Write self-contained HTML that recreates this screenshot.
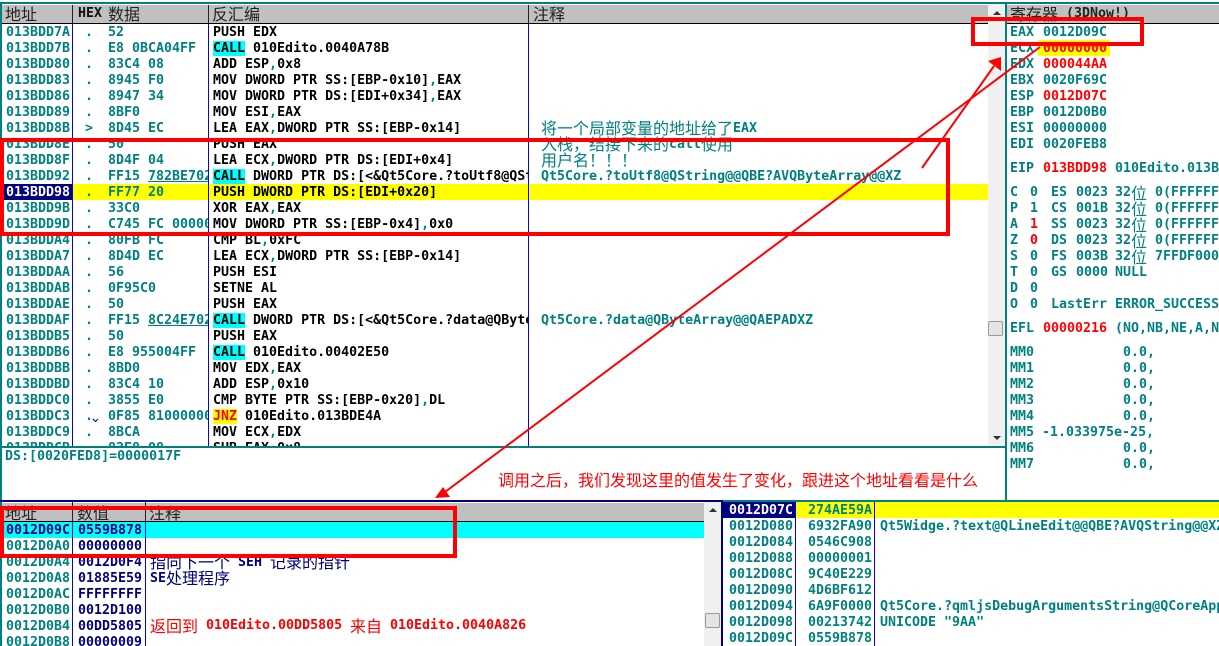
<!DOCTYPE html>
<html><head><meta charset="utf-8">
<style>
html,body{margin:0;padding:0;background:#fff}
#p{position:relative;width:1219px;height:646px;overflow:hidden;background:#fff;font:bold 13.3px/18px "DejaVu Sans Mono","Liberation Mono",monospace;color:#008080}
#p div,#p span{position:absolute;white-space:pre}
.c{font:16px/16px "Noto Sans CJK SC","WenQuanYi Zen Hei",sans-serif!important;font-weight:400}
#p span.n{position:static}
.hd{background:#c0c0c0;height:18px;top:5px}
.h{top:4px;color:#222;font:16px/18px "Noto Sans CJK SC","WenQuanYi Zen Hei",sans-serif}
.l{background:#00f;width:1px}
.r{left:0;width:988px;height:18px;overflow:hidden}
.a{left:6px}.d{left:85px}.x{left:108px;width:100px;height:18px;overflow:hidden}.s{left:213px;width:315px;height:18px;overflow:hidden;color:#000}.t{left:541px}
.s i{font-style:normal;color:#008080}
.s b{background:#0ff;font-weight:bold}
.k{left:1010px}.v{left:1043px}.red{color:#f00}
.f1{left:1030px}.f2{left:1051px}.f3{left:1076px}.f4{left:1115px}.f5{left:1155px}.w4{left:1131px}
.m{left:1123px}
.q{left:6px}.w{left:78px;color:#000080}.nv{color:#000080}
.z1{left:729px}.z2{left:808px}.z3{left:880px}
</style></head><body><div id="p">

<div style="left:0;top:2px;width:1219px;height:2px;background:#008080"></div>
<div class="hd" style="left:2px;width:986px"></div>
<div class="hd" style="left:1007px;width:212px"></div>
<div style="left:2px;top:23px;width:986px;height:1px;background:#000"></div>
<div style="left:1007px;top:23px;width:212px;height:1px;background:#000"></div>
<div style="left:72px;top:5px;width:1px;height:18px;background:#222"></div>
<div style="left:208px;top:5px;width:1px;height:18px;background:#222"></div>
<div style="left:528px;top:5px;width:1px;height:18px;background:#222"></div>
<div class="h" style="left:5px">地址</div>
<div style="left:78px;top:5px;color:#111">HEX</div>
<div class="h" style="left:108px">数据</div>
<div class="h" style="left:212px">反汇编</div>
<div class="h" style="left:533px">注释</div>
<div class="h" style="left:1010px">寄存器</div>
<div style="left:1066px;top:5px;color:#222">(3DNow!)</div>

<div style="left:0;top:2px;width:2px;height:644px;background:#008080"></div>

<div style="left:0;top:24px;width:988px;height:422px;overflow:hidden">
<div style="left:0;top:160px;width:988px;height:16px;background:#ff0"></div>
<div style="left:2px;top:160px;width:70px;height:16px;background:#000080"></div>
<div class="r" style="top:0"><span class="a">013BDD7A</span><span class="d">.</span><span class="x">52</span><span class="s">PUSH EDX</span></div>
<div class="r" style="top:16px"><span class="a">013BDD7B</span><span class="d">.</span><span class="x">E8 0BCA04FF</span><span class="s"><b>CALL</b> 010Edito.0040A78B</span></div>
<div class="r" style="top:32px"><span class="a">013BDD80</span><span class="d">.</span><span class="x">83C4 08</span><span class="s">ADD ESP<i>,</i>0x8</span></div>
<div class="r" style="top:48px"><span class="a">013BDD83</span><span class="d">.</span><span class="x">8945 F0</span><span class="s">MOV DWORD PTR SS:[EBP-0x10]<i>,</i>EAX</span></div>
<div class="r" style="top:64px"><span class="a">013BDD86</span><span class="d">.</span><span class="x">8947 34</span><span class="s">MOV DWORD PTR DS:[EDI+0x34]<i>,</i>EAX</span></div>
<div class="r" style="top:80px"><span class="a">013BDD89</span><span class="d">.</span><span class="x">8BF0</span><span class="s">MOV ESI<i>,</i>EAX</span></div>
<div class="r" style="top:96px"><span class="a">013BDD8B</span><span class="d">&gt;</span><span class="x">8D45 EC</span><span class="s">LEA EAX<i>,</i>DWORD PTR SS:[EBP-0x14]</span></div>
<div class="r" style="top:112px"><span class="a">013BDD8E</span><span class="d">.</span><span class="x">50</span><span class="s">PUSH EAX</span></div>
<div class="r" style="top:128px"><span class="a">013BDD8F</span><span class="d">.</span><span class="x">8D4F 04</span><span class="s">LEA ECX<i>,</i>DWORD PTR DS:[EDI+0x4]</span></div>
<div class="r" style="top:144px"><span class="a">013BDD92</span><span class="d">.</span><span class="x">FF15 <span class="n" style="text-decoration:underline">782BE702</span></span><span class="s"><b>CALL</b> DWORD PTR DS:[&lt;&amp;Qt5Core.?toUtf8@QString@@QBE?AVQByteArray@@XZ&gt;]</span><span class="t">Qt5Core.?toUtf8@QString@@QBE?AVQByteArray@@XZ</span></div>
<div class="r" style="top:160px"><span class="a" style="color:#fff">013BDD98</span><span class="d">.</span><span class="x">FF77 20</span><span class="s">PUSH DWORD PTR DS:[EDI+0x20]</span></div>
<div class="r" style="top:176px"><span class="a">013BDD9B</span><span class="d">.</span><span class="x">33C0</span><span class="s">XOR EAX<i>,</i>EAX</span></div>
<div class="r" style="top:192px"><span class="a">013BDD9D</span><span class="d">.</span><span class="x">C745 FC 00000000</span><span class="s">MOV DWORD PTR SS:[EBP-0x4]<i>,</i>0x0</span></div>
<div class="r" style="top:208px"><span class="a">013BDDA4</span><span class="d">.</span><span class="x">80FB FC</span><span class="s">CMP BL<i>,</i>0xFC</span></div>
<div class="r" style="top:224px"><span class="a">013BDDA7</span><span class="d">.</span><span class="x">8D4D EC</span><span class="s">LEA ECX<i>,</i>DWORD PTR SS:[EBP-0x14]</span></div>
<div class="r" style="top:240px"><span class="a">013BDDAA</span><span class="d">.</span><span class="x">56</span><span class="s">PUSH ESI</span></div>
<div class="r" style="top:256px"><span class="a">013BDDAB</span><span class="d">.</span><span class="x">0F95C0</span><span class="s">SETNE AL</span></div>
<div class="r" style="top:272px"><span class="a">013BDDAE</span><span class="d">.</span><span class="x">50</span><span class="s">PUSH EAX</span></div>
<div class="r" style="top:288px"><span class="a">013BDDAF</span><span class="d">.</span><span class="x">FF15 <span class="n" style="text-decoration:underline">8C24E702</span></span><span class="s"><b>CALL</b> DWORD PTR DS:[&lt;&amp;Qt5Core.?data@QByteArray@@QAEPADXZ&gt;]</span><span class="t">Qt5Core.?data@QByteArray@@QAEPADXZ</span></div>
<div class="r" style="top:304px"><span class="a">013BDDB5</span><span class="d">.</span><span class="x">50</span><span class="s">PUSH EAX</span></div>
<div class="r" style="top:320px"><span class="a">013BDDB6</span><span class="d">.</span><span class="x">E8 955004FF</span><span class="s"><b>CALL</b> 010Edito.00402E50</span></div>
<div class="r" style="top:336px"><span class="a">013BDDBB</span><span class="d">.</span><span class="x">8BD0</span><span class="s">MOV EDX<i>,</i>EAX</span></div>
<div class="r" style="top:352px"><span class="a">013BDDBD</span><span class="d">.</span><span class="x">83C4 10</span><span class="s">ADD ESP<i>,</i>0x10</span></div>
<div class="r" style="top:368px"><span class="a">013BDDC0</span><span class="d">.</span><span class="x">3855 E0</span><span class="s">CMP BYTE PTR SS:[EBP-0x20]<i>,</i>DL</span></div>
<div class="r" style="top:384px"><span class="a">013BDDC3</span><span class="d">.</span><span class="x">0F85 81000000</span><span class="s"><b style="background:#ff0;color:#f00">JNZ</b> 010Edito.013BDE4A</span></div>
<div class="r" style="top:400px"><span class="a">013BDDC9</span><span class="d">.</span><span class="x">8BCA</span><span class="s">MOV ECX<i>,</i>EDX</span></div>
<div class="r" style="top:416px"><span class="a">013BDDCB</span><span class="d">.</span><span class="x">83E8 08</span><span class="s">SUB EAX<i>,</i>0x8</span></div>
</div>
<div class="l" style="left:72px;top:24px;height:422px"></div>
<div class="l" style="left:208px;top:24px;height:422px"></div>
<div class="l" style="left:528px;top:24px;height:422px"></div>

<!-- annotation -->
<div class="c" style="left:541px;top:119px">将一个局部变量的地址给了</div><div style="left:733px;top:120px">EAX</div>
<div class="c" style="left:541px;top:135px">入栈，结接下来的</div><div style="left:669px;top:136px">call</div><div class="c" style="left:701px;top:135px">使用</div>
<div class="c" style="left:541px;top:151px">用户名！！！</div>

<!-- scrollbar top -->
<div style="left:988px;top:4px;width:17px;height:442px;background:#f0f0f0"></div>
<div style="left:993px;top:11px;width:0;height:0;border:4px solid transparent;border-top:0;border-bottom:4px solid #333"></div>
<div style="left:993px;top:436px;width:0;height:0;border:4px solid transparent;border-bottom:0;border-top:4px solid #333"></div>
<div style="left:988px;top:321px;width:13px;height:13px;background:#e4e4e4;border:1px solid #999;border-radius:2px"></div>

<!-- registers -->
<div style="left:1005px;top:2px;width:2px;height:499px;background:#008080"></div>
<div style="left:1038px;top:40px;width:72px;height:16px;background:#ff0"></div>
<div class="k" style="top:24px">EAX</div><div class="v" style="top:24px">0012D09C</div>
<div class="k" style="top:40px">ECX</div><div class="v red" style="top:40px">00000000</div>
<div class="k" style="top:56px">EDX</div><div class="v red" style="top:56px">000044AA</div>
<div class="k" style="top:72px">EBX</div><div class="v" style="top:72px">0020F69C</div>
<div class="k" style="top:88px">ESP</div><div class="v red" style="top:88px">0012D07C</div>
<div class="k" style="top:104px">EBP</div><div class="v" style="top:104px">0012D0B0</div>
<div class="k" style="top:120px">ESI</div><div class="v" style="top:120px">00000000</div>
<div class="k" style="top:136px">EDI</div><div class="v" style="top:136px">0020FEB8</div>
<div class="k" style="top:160px">EIP</div><div class="v red" style="top:160px">013BDD98</div><div class="f4" style="top:160px">010Edito.013B</div>

<div class="k" style="top:184px">C</div><div class="f1" style="top:184px">0</div><div class="f2" style="top:184px">ES</div><div class="f3" style="top:184px">0023</div><div class="f4" style="top:184px">32</div><div class="c w4" style="top:184px">位</div><div class="f5" style="top:184px">0(FFFFFF</div>
<div class="k" style="top:200px">P</div><div class="f1" style="top:200px">1</div><div class="f2" style="top:200px">CS</div><div class="f3" style="top:200px">001B</div><div class="f4" style="top:200px">32</div><div class="c w4" style="top:200px">位</div><div class="f5" style="top:200px">0(FFFFFF</div>
<div class="k" style="top:216px">A</div><div class="f1 red" style="top:216px">1</div><div class="f2" style="top:216px">SS</div><div class="f3" style="top:216px">0023</div><div class="f4" style="top:216px">32</div><div class="c w4" style="top:216px">位</div><div class="f5" style="top:216px">0(FFFFFF</div>
<div class="k" style="top:232px">Z</div><div class="f1 red" style="top:232px">0</div><div class="f2" style="top:232px">DS</div><div class="f3" style="top:232px">0023</div><div class="f4" style="top:232px">32</div><div class="c w4" style="top:232px">位</div><div class="f5" style="top:232px">0(FFFFFF</div>
<div class="k" style="top:248px">S</div><div class="f1" style="top:248px">0</div><div class="f2" style="top:248px">FS</div><div class="f3" style="top:248px">003B</div><div class="f4" style="top:248px">32</div><div class="c w4" style="top:248px">位</div><div class="f5" style="top:248px">7FFDF000</div>
<div class="k" style="top:264px">T</div><div class="f1" style="top:264px">0</div><div class="f2" style="top:264px">GS</div><div class="f3" style="top:264px">0000</div><div class="f4" style="top:264px">NULL</div>
<div class="k" style="top:280px">D</div><div class="f1" style="top:280px">0</div>
<div class="k" style="top:296px">O</div><div class="f1" style="top:296px">0</div><div class="f2" style="top:296px">LastErr</div><div class="f4" style="top:296px">ERROR_SUCCESS</div>
<div class="k" style="top:320px">EFL</div><div class="v red" style="top:320px">00000216</div><div class="f4" style="top:320px">(NO,NB,NE,A,N</div>
<div class="k" style="top:344px">MM0</div><div class="m" style="top:344px">0.0,</div>
<div class="k" style="top:360px">MM1</div><div class="m" style="top:360px">0.0,</div>
<div class="k" style="top:376px">MM2</div><div class="m" style="top:376px">0.0,</div>
<div class="k" style="top:392px">MM3</div><div class="m" style="top:392px">0.0,</div>
<div class="k" style="top:408px">MM4</div><div class="m" style="top:408px">0.0,</div>
<div class="k" style="top:424px">MM5</div><div style="left:1042px;top:424px">-1.033975e-25,</div>
<div class="k" style="top:440px">MM6</div><div class="m" style="top:440px">0.0,</div>
<div class="k" style="top:456px">MM7</div><div class="m" style="top:456px">0.0,</div>

<!-- info pane -->
<div style="left:0;top:446px;width:1005px;height:2px;background:#008080"></div>
<div style="left:5px;top:448px">DS:[0020FED8]=0000017F</div>
<div class="c" style="left:498px;top:471px;color:#f00">调用之后，我们发现这里的值发生了变化，跟进这个地址看看是什么</div>

<!-- dump pane -->
<div style="left:0;top:500px;width:722px;height:2px;background:#000080"></div>
<div style="left:722px;top:500px;width:497px;height:2px;background:#008080"></div>
<div style="left:2px;top:503px;width:702px;height:19px;background:#c0c0c0"></div>
<div style="left:2px;top:521px;width:702px;height:1px;background:#000"></div>
<div style="left:72px;top:502px;width:1px;height:20px;background:#222"></div>
<div style="left:145px;top:502px;width:1px;height:20px;background:#222"></div>
<div class="h" style="left:5px;top:503px">地址</div>
<div class="h" style="left:77px;top:503px">数值</div>
<div class="h" style="left:149px;top:503px">注释</div>
<div style="left:2px;top:522px;width:702px;height:16px;background:#0ff"></div>
<div class="l" style="left:72px;top:522px;height:124px"></div>
<div class="l" style="left:145px;top:522px;height:124px"></div>
<div class="q" style="top:522px;color:#000080">0012D09C</div><div class="w" style="top:522px">0559B878</div>
<div class="q" style="top:538px">0012D0A0</div><div class="w" style="top:538px">00000000</div>
<div class="q" style="top:554px">0012D0A4</div><div class="w" style="top:554px">0012D0F4</div>
<div class="c nv" style="left:150px;top:553px">指向下一个</div><div class="nv" style="left:238px;top:554px">SEH</div><div class="c nv" style="left:270px;top:553px">记录的指针</div>
<div class="q" style="top:570px">0012D0A8</div><div class="w" style="top:570px">01885E59</div>
<div class="nv" style="left:150px;top:570px">SE</div><div class="c nv" style="left:166px;top:569px">处理程序</div>
<div class="q" style="top:586px">0012D0AC</div><div class="w" style="top:586px">FFFFFFFF</div>
<div class="q" style="top:602px">0012D0B0</div><div class="w" style="top:602px">0012D100</div>
<div class="q" style="top:618px">0012D0B4</div><div class="w" style="top:618px">00DD5805</div>
<div class="c" style="left:150px;top:617px;color:#f00">返回到</div><div class="red" style="left:206px;top:617px">010Edito.00DD5805</div><div class="c" style="left:350px;top:617px;color:#f00">来自</div><div class="red" style="left:390px;top:617px">010Edito.0040A826</div>
<div class="q" style="top:634px">0012D0B8</div><div class="w" style="top:634px">00000009</div>

<!-- bottom scrollbar -->
<div style="left:704px;top:502px;width:17px;height:144px;background:#f0f0f0"></div>
<div style="left:709px;top:508px;width:0;height:0;border:4px solid transparent;border-top:0;border-bottom:4px solid #333"></div>
<div style="left:705px;top:613px;width:13px;height:13px;background:#e4e4e4;border:1px solid #999;border-radius:2px"></div>

<!-- stack -->
<div style="left:721px;top:500px;width:2px;height:146px;background:#000080"></div>
<div style="left:723px;top:502px;width:72px;height:16px;background:#000080"></div>
<div style="left:795px;top:502px;width:424px;height:16px;background:#ff0"></div>
<div class="l" style="left:795px;top:502px;height:144px"></div>
<div class="l" style="left:874px;top:502px;height:144px"></div>
<div class="z1" style="top:502px;color:#fff">0012D07C</div><div class="z2" style="top:502px">274AE59A</div>
<div class="z1" style="top:518px">0012D080</div><div class="z2" style="top:518px">6932FA90</div><div class="z3" style="top:518px">Qt5Widge.?text@QLineEdit@@QBE?AVQString@@XZ</div>
<div class="z1" style="top:534px">0012D084</div><div class="z2" style="top:534px">0546C908</div>
<div class="z1" style="top:550px">0012D088</div><div class="z2" style="top:550px">00000001</div>
<div class="z1" style="top:566px">0012D08C</div><div class="z2" style="top:566px">9C40E229</div>
<div class="z1" style="top:582px">0012D090</div><div class="z2" style="top:582px">4D6BF612</div>
<div class="z1" style="top:598px">0012D094</div><div class="z2" style="top:598px">6A9F0000</div><div class="z3" style="top:598px">Qt5Core.?qmljsDebugArgumentsString@QCoreApp</div>
<div class="z1" style="top:614px">0012D098</div><div class="z2" style="top:614px">00213742</div><div class="z3" style="top:614px">UNICODE "9AA"</div>
<div class="z1" style="top:630px">0012D09C</div><div class="z2" style="top:630px">0559B878</div>

<!-- red overlays -->
<div style="left:0;top:138px;width:942px;height:90px;border:4px solid #f00"></div>
<div style="left:971px;top:17px;width:165px;height:21px;border:4px solid #f00"></div>
<div style="left:0;top:506px;width:449px;height:44px;border:4px solid #f00"></div>
<svg style="position:absolute;left:0;top:0" width="1219" height="646" viewBox="0 0 1219 646">
<line x1="922" y1="168" x2="994" y2="66" stroke="#f00" stroke-width="2"/>
<polygon points="1001,57 988,61 1001,71" fill="#f00"/>
<line x1="1040" y1="47" x2="445" y2="492" stroke="#f00" stroke-width="2"/>
<polygon points="435,498 450,497 443,487" fill="#f00"/>
<path d="M93 419l2.500 2.500 2.500-2.500" fill="none" stroke="#000080" stroke-width="1"/>
</svg>
</div></body></html>
